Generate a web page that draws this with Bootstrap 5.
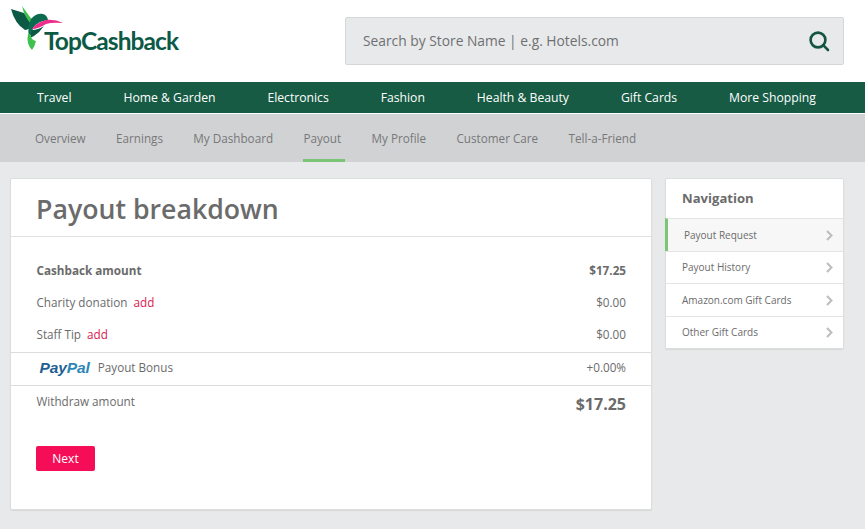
<!DOCTYPE html>
<html lang="en"><head><meta charset="utf-8"><title>Payout</title>
<link rel="stylesheet" href="https://cdn.jsdelivr.net/npm/bootstrap@5.3.0/dist/css/bootstrap.min.css">
<style>
html,body{height:100%}
body{font-family:"Open Sans",sans-serif;background:#e8e9ea;color:#6b6b6b;font-size:11.7px;overflow:hidden}
.tc-head{height:82px;background:#fff;padding:0 21px 0 10px}
.tc-logo{width:170px;height:56px;margin-top:5px}
.tc-word{font-family:"Lato",sans-serif;font-weight:700;font-size:24.5px;letter-spacing:-.91px;color:#0c5a45;line-height:30px;left:34px;top:21px}
.tc-search{width:499px;height:48px;margin-top:17px;background:#e8e9ea;border:1px solid #d5d6d7;border-radius:2px;padding:0 13px 0 17px;font-size:13.8px;color:#6f7072}
.tc-main{height:31px;background:#175b44;padding:1px 49px 0 37px;color:#fff;font-size:12.2px}
.tc-sub{height:49px;background:#d1d2d3;border-top:1px solid #fff;padding-left:35px}
.tc-sub a{color:#77787a;text-decoration:none;font-size:11.7px;height:48px;line-height:49px;padding:0 4px 0 0;margin-right:26.35px;display:block}
.tc-sub a.tc-on{border-bottom:3px solid #7cc576}
.tc-body{padding:16px 21px 0 10px;gap:13px}
.tc-panel{background:#fff;border:1px solid #dcdddd;box-shadow:0 1px 1px #d8d8d8;border-radius:2px}
.tc-left{width:642px;height:332px}
.tc-title{height:58px;border-bottom:1px solid #e2e2e2;padding:11px 25px 0;font-size:26.7px;font-weight:600;color:#6b6b6b;line-height:37px;margin:0}
.tc-rows{padding-top:18px}
.tc-row{height:32px;padding:0 25px 0 25.5px;align-items:center}
.tc-row b{font-weight:700}
.tc-add{color:#d9224f;text-decoration:none;margin-left:3px}
.tc-bonus{height:34px;border-top:1px solid #dcdcdc;border-bottom:1px solid #dcdcdc;margin-top:1px;padding-bottom:2px}
.tc-pp{font-family:"Liberation Sans",sans-serif;font-style:italic;font-weight:700;font-size:15.5px;color:#1f5f92;margin:0 8px 0 3px;letter-spacing:-.1px}
.tc-pp i{color:#2d86b8}
.tc-with{height:40px;align-items:flex-start}
.tc-with>span{padding-top:7px}
.tc-with strong{font-size:16px;font-weight:700;padding-top:6px;display:block}
.tc-next{background:#f50e57;border:0;border-radius:2px;color:#fff;width:59px;height:25px;font-size:12px;padding:1px 0 0;margin:20px 0 0 25px}
.tc-right{width:179px;height:171px}
.tc-navh{height:39px;font-size:13.1px;font-weight:700;padding:0 16px;line-height:39px;color:#6b6b6b;margin:0}
.tc-right .list-group-item{border-color:#e4e4e4;border-width:1px 0 0;padding:1px 10px 0 16px;height:32.5px;font-size:10px;color:#6b6b6b;border-radius:0;background:#fff}
.tc-right .list-group-item.tc-cur{background:#f7f7f7;border-left:3px solid #7cc576;padding-left:16px;margin-left:-1px}
</style></head><body>
<div class="tc-head d-flex justify-content-between align-items-start">
 <div class="tc-logo position-relative">
  <svg width="60" height="52" viewBox="10 5 60 52" class="d-block">
   <path d="M11 9 L24 13 Q31 22 32 26 Q28 30 25 30 Q15 24 11 9Z" fill="#0c5a45"/>
   <path d="M22 6 L30 17 L35 22 L31 24 Q24 16 22 6Z" fill="#3fc24d"/>
   <path d="M31 19 Q36 13 43 14 Q47 15 48 20 Q38 21 33 28 L32 34 L29 36 Q27 28 31 19Z" fill="#0c6a50"/>
   <path d="M32 29 Q36 23 46 20 Q55 19 63 23 Q52 22 46 24 Q38 29 32 29Z" fill="#ef2c8d"/>
   <path d="M32 30 Q38 30 44 26 Q40 32 34 36 L30 38Z" fill="#0c5a45"/>
   <path d="M28 34 Q26 44 32 50 Q35 46 36 41 Q31 40 30 34Z" fill="#3fc24d"/>
  </svg>
  <span class="tc-word position-absolute">TopCashback</span>
 </div>
 <div class="tc-search d-flex align-items-center justify-content-between">
  <span>Search by Store Name | e.g. Hotels.com</span>
  <svg width="22" height="22" viewBox="0 0 22 22" fill="none" stroke="#14553f" stroke-width="2.6"><circle cx="10" cy="10" r="7.4"/><path d="M15.2 15.2 L20 20" stroke-linecap="round"/></svg>
 </div>
</div>
<nav class="tc-main d-flex justify-content-between align-items-center">
 <span>Travel</span><span>Home &amp; Garden</span><span>Electronics</span><span>Fashion</span><span>Health &amp; Beauty</span><span>Gift Cards</span><span>More Shopping</span>
</nav>
<nav class="tc-sub d-flex">
 <a href="#">Overview</a><a href="#">Earnings</a><a href="#">My Dashboard</a><a href="#" class="tc-on">Payout</a><a href="#">My Profile</a><a href="#">Customer Care</a><a href="#">Tell-a-Friend</a>
</nav>
<div class="tc-body d-flex align-items-start">
 <main class="tc-panel tc-left">
  <h1 class="tc-title">Payout breakdown</h1>
  <div class="tc-rows">
   <div class="tc-row d-flex justify-content-between"><b>Cashback amount</b><b>$17.25</b></div>
   <div class="tc-row d-flex justify-content-between"><span>Charity donation <a href="#" class="tc-add">add</a></span><span>$0.00</span></div>
   <div class="tc-row d-flex justify-content-between"><span>Staff Tip <a href="#" class="tc-add">add</a></span><span>$0.00</span></div>
   <div class="tc-row tc-bonus d-flex justify-content-between"><span class="d-flex align-items-center"><span class="tc-pp">Pay<i>Pal</i></span>Payout Bonus</span><span>+0.00%</span></div>
   <div class="tc-row tc-with d-flex justify-content-between"><span>Withdraw amount</span><strong>$17.25</strong></div>
  </div>
  <button class="btn tc-next" type="button">Next</button>
 </main>
 <aside class="tc-panel tc-right">
  <h2 class="tc-navh">Navigation</h2>
  <div class="list-group list-group-flush">
   <a href="#" class="list-group-item tc-cur d-flex justify-content-between align-items-center">Payout Request<svg width="7" height="11" viewBox="0 0 7 11" fill="none" stroke="#bdbdbd" stroke-width="2"><path d="M1 1l4.5 4.5L1 10"/></svg></a>
   <a href="#" class="list-group-item d-flex justify-content-between align-items-center">Payout History<svg width="7" height="11" viewBox="0 0 7 11" fill="none" stroke="#bdbdbd" stroke-width="2"><path d="M1 1l4.5 4.5L1 10"/></svg></a>
   <a href="#" class="list-group-item d-flex justify-content-between align-items-center">Amazon.com Gift Cards<svg width="7" height="11" viewBox="0 0 7 11" fill="none" stroke="#bdbdbd" stroke-width="2"><path d="M1 1l4.5 4.5L1 10"/></svg></a>
   <a href="#" class="list-group-item d-flex justify-content-between align-items-center">Other Gift Cards<svg width="7" height="11" viewBox="0 0 7 11" fill="none" stroke="#bdbdbd" stroke-width="2"><path d="M1 1l4.5 4.5L1 10"/></svg></a>
  </div>
 </aside>
</div>
<script src="https://cdn.jsdelivr.net/npm/bootstrap@5.3.0/dist/js/bootstrap.bundle.min.js"></script>
</body></html>
